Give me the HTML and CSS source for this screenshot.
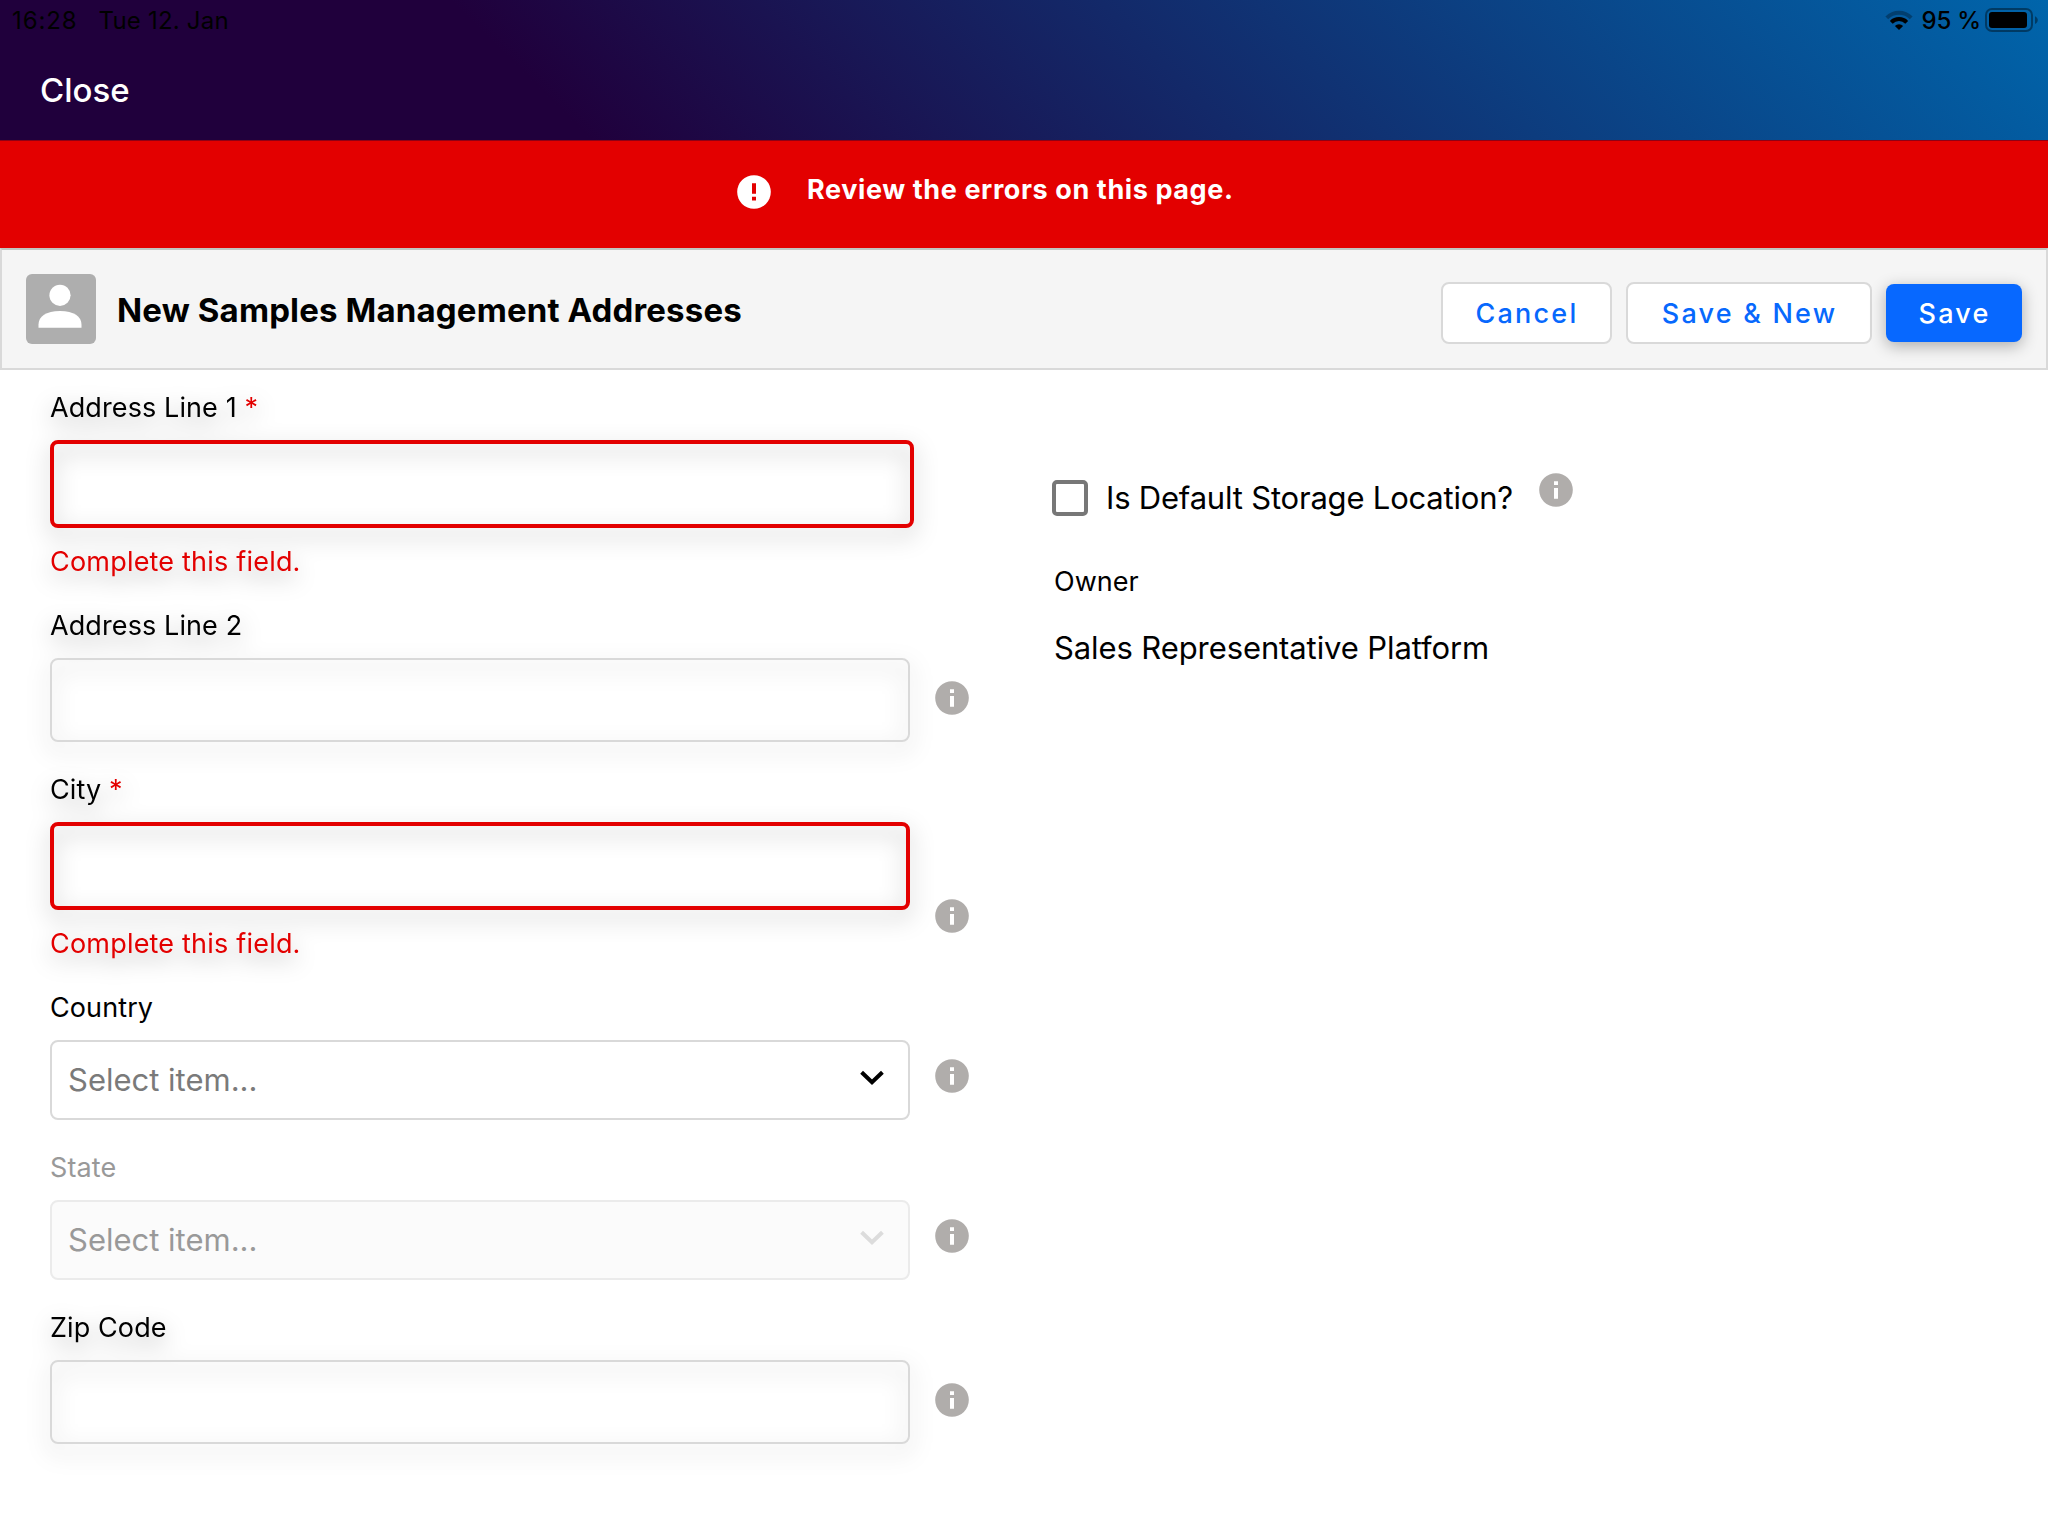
FILE: index.html
```
<!DOCTYPE html>
<html lang="en">
<head>
<meta charset="utf-8">
<title>New Samples Management Addresses</title>
<link rel="stylesheet" href="styles.css">
</head>
<body>
<svg class="sprite" aria-hidden="true">
  <symbol id="info" viewBox="0 0 34 34">
    <circle cx="17" cy="17" r="16.8" fill="#b0adab"/>
    <path d="M15 8.3h4v3.6h-4zM15 15h4v10.8h-4z" fill="#fff"/>
  </symbol>
  <symbol id="chevron" viewBox="0 0 24 16">
    <path d="M1.600 2.2 12 12.2 22.400 2.2" fill="none" stroke="currentColor" stroke-width="4"/>
  </symbol>
</svg>
<header class="top">
  <div class="status">
    <span class="time">16:28</span>
    <span class="date">Tue 12. Jan</span>
    <svg class="wifi" viewBox="0 0 28 20" width="28" height="20">
      <path d="M1.8 7.8a17.2 17.2 0 0 1 24.4 0" fill="none" stroke="#000" stroke-opacity=".3" stroke-width="4"/>
      <path d="M6.3 12.3a10.9 10.9 0 0 1 15.4 0" fill="none" stroke="#000" stroke-width="4"/>
      <path d="M9.9 15.9a5.8 5.8 0 0 1 8.2 0L14 20z"/>
    </svg>
    <span class="level">95 %</span>
    <svg class="battery" viewBox="0 0 54 24" width="54" height="24">
      <rect x="1" y="1" width="46" height="22" rx="6" fill="none" stroke="#000" stroke-opacity=".4" stroke-width="2"/>
      <rect x="4" y="4" width="38" height="16" rx="3"/>
      <path d="M50 8.3c3.7 1.6 3.7 6 0 7.6z" fill-opacity=".4"/>
    </svg>
  </div>
  <a class="close">Close</a>
</header>
<div class="alert">
  <svg viewBox="0 0 34 34" width="34" height="34">
    <circle cx="17" cy="17" r="16.8" fill="#fff"/>
    <path d="M15 8.3h4v10.4h-4zM15 21.8h4v3.8h-4z" fill="#e30000"/>
  </svg>
  <strong class="alert-text">Review the errors on this page.</strong>
</div>
<section class="bar">
  <svg class="avatar" viewBox="0 0 70 70" width="70" height="70">
    <rect width="70" height="70" rx="6" fill="#aeaeae"/>
    <circle cx="34" cy="21.3" r="10.6" fill="#fff"/>
    <path d="M12.5 53.7v-3C12.5 42.5 20 37 34 37s21.5 5.5 21.5 13.7v3z" fill="#fff"/>
  </svg>
  <h1 class="title">New Samples Management Addresses</h1>
  <div class="actions">
    <button class="btn cancel">Cancel</button>
    <button class="btn save-new">Save &amp; New</button>
    <button class="btn primary">Save</button>
  </div>
</section>
<main class="form">
  <div class="left">
    <div class="field line1">
      <div class="control raised">
        <label class="label">Address Line 1 <i class="req">*</i></label>
        <div class="input invalid"></div>
        <p class="error">Complete this field.</p>
      </div>
    </div>
    <div class="field line2">
      <div class="control raised">
        <label class="label">Address Line 2</label>
        <div class="input"></div>
      </div>
      <svg class="info"><use href="#info"/></svg>
    </div>
    <div class="field city">
      <div class="control raised">
        <label class="label">City <i class="req">*</i></label>
        <div class="input invalid"></div>
        <p class="error">Complete this field.</p>
      </div>
      <svg class="info"><use href="#info"/></svg>
    </div>
    <div class="field country">
      <div class="control">
        <label class="label">Country</label>
        <div class="input select"><span class="value">Select item...</span><svg class="chevron"><use href="#chevron"/></svg></div>
      </div>
      <svg class="info"><use href="#info"/></svg>
    </div>
    <div class="field state">
      <div class="control disabled">
        <label class="label">State</label>
        <div class="input select"><span class="value">Select item...</span><svg class="chevron"><use href="#chevron"/></svg></div>
      </div>
      <svg class="info"><use href="#info"/></svg>
    </div>
    <div class="field zip">
      <div class="control raised">
        <label class="label">Zip Code</label>
        <div class="input"></div>
      </div>
      <svg class="info"><use href="#info"/></svg>
    </div>
  </div>
  <div class="right">
    <div class="check-row">
      <span class="checkbox"></span>
      <span class="check-text">Is Default Storage Location?</span>
      <svg class="info"><use href="#info"/></svg>
    </div>
    <div class="owner-label">Owner</div>
    <div class="owner">Sales Representative Platform</div>
  </div>
</main>
</body>
</html>
```
FILE: styles.css
```
* { box-sizing: border-box; }
body {
  margin: 0;
  width: 2048px;
  height: 1536px;
  overflow: hidden;
  background: #fff;
  color: #000;
  font-family: Inter, "Liberation Sans", sans-serif;
}
.sprite { display: block; width: 0; height: 0; }
.top {
  height: 140px;
  background: linear-gradient(45deg, #20003c 27%, #0065ab 100%);
}
.status {
  display: flex;
  align-items: center;
  height: 40px;
  padding: 0 9px 0 12px;
  font-size: 24px;
  line-height: 40px;
}
.time, .date, .level { padding-top: 1px; }
.time { letter-spacing: 0.9px; }
.date { margin-left: 21px; letter-spacing: 0.2px; }
.wifi { margin: 0 9px 0 auto; }
.level { letter-spacing: -0.2px; font-weight: 500; }
.battery { display: block; margin-left: 4px; }
.close {
  display: block;
  padding-left: 40px;
  color: #fff;
  font-size: 33px;
  line-height: 40px;
  margin-top: 30px;
  font-weight: 500;
}
.alert {
  display: flex;
  align-items: center;
  height: 108px;
  padding: 0 0 6px 737px;
  border-top: 1px solid #900014;
  background: #e30000;
  color: #fff;
}
.alert-text {
  margin-left: 36px;
  padding-bottom: 4px;
  font-size: 27px;
  font-weight: 700;
  line-height: 36px;
  letter-spacing: 0.6px;
}
.bar {
  display: flex;
  align-items: center;
  height: 122px;
  padding: 0 24px;
  border: 2px solid #d9d9d9;
  border-top-color: #c0c5c1;
  background: #f5f5f5;
}
.title { margin: 2px 0 0 21px; font-size: 33px; font-weight: 700; line-height: 40px; letter-spacing: 0.15px; }
.actions { display: flex; align-items: center; gap: 14px; margin: 8px 0 0 auto; }
.btn {
  height: 62px;
  padding: 1px 0 0 1px;
  border: 2px solid #d9d9d9;
  border-radius: 8px;
  background: #fff;
  color: #0768fd;
  font: 500 27px/57px Inter, "Liberation Sans", sans-serif;
  letter-spacing: 2.2px;
}
.cancel { width: 171px; }
.save-new { width: 246px; }
.primary {
  width: 136px;
  height: 58px;
  border: 0;
  background: #0768ff;
  color: #fff;
  box-shadow: 0 4px 16px rgba(0, 0, 0, 0.3);
}
.form { display: flex; padding-left: 50px; }
.left { width: 1002px; }
.field { display: flex; }
.control { width: 860px; }
.line1 .control { width: 864px; }
.line1 { height: 238px; padding-top: 20px; }
.line2 { height: 164px; }
.city { height: 218px; }
.country, .state { height: 160px; }
.raised { filter: drop-shadow(0 8px 11px rgba(0, 0, 0, 0.32)); }
.label { display: block; height: 50px; font-size: 27px; line-height: 36px; letter-spacing: 0.1px; }
.req { color: #e30000; font-style: normal; }
.input {
  height: 84px;
  border: 2px solid #d9d9d9;
  border-radius: 8px;
}
.input.invalid { height: 88px; border: 4px solid #e30000; }
.error { margin: 16px 0 0; color: #e30000; font-size: 27px; line-height: 36px; letter-spacing: 0.2px; }
.select { display: flex; align-items: center; height: 80px; padding: 0 24px 0 16px; }
.value { margin-top: -2px; color: #7a7a7a; font-size: 31px; }
.chevron { width: 24px; height: 16px; margin: -4px 0 0 auto; }
.disabled .label, .disabled .value { color: #999; }
.disabled .input { border-color: #ebebeb; background: #fbfbfb; }
.disabled .chevron { color: #dcdcdc; }
.info { flex: none; width: 34px; height: 34px; margin: 73px 0 0 25px; }
.city .info { margin-top: 127px; }
.country .info, .state .info { margin-top: 69px; }
.right { padding-top: 110px; }
.check-row { display: flex; height: 36px; align-items: center; }
.checkbox { width: 36px; height: 36px; border: 4px solid #777; border-radius: 5px; }
.check-text { margin: -2px 0 0 18px; font-size: 31px; letter-spacing: -0.2px; }
.check-row .info { margin: -16px 0 0 26px; }
.owner-label { margin: 48px 0 0 2px; font-size: 27px; line-height: 36px; }
.owner { margin: 28px 0 0 2px; font-size: 31px; line-height: 40px; letter-spacing: -0.1px; }
```
